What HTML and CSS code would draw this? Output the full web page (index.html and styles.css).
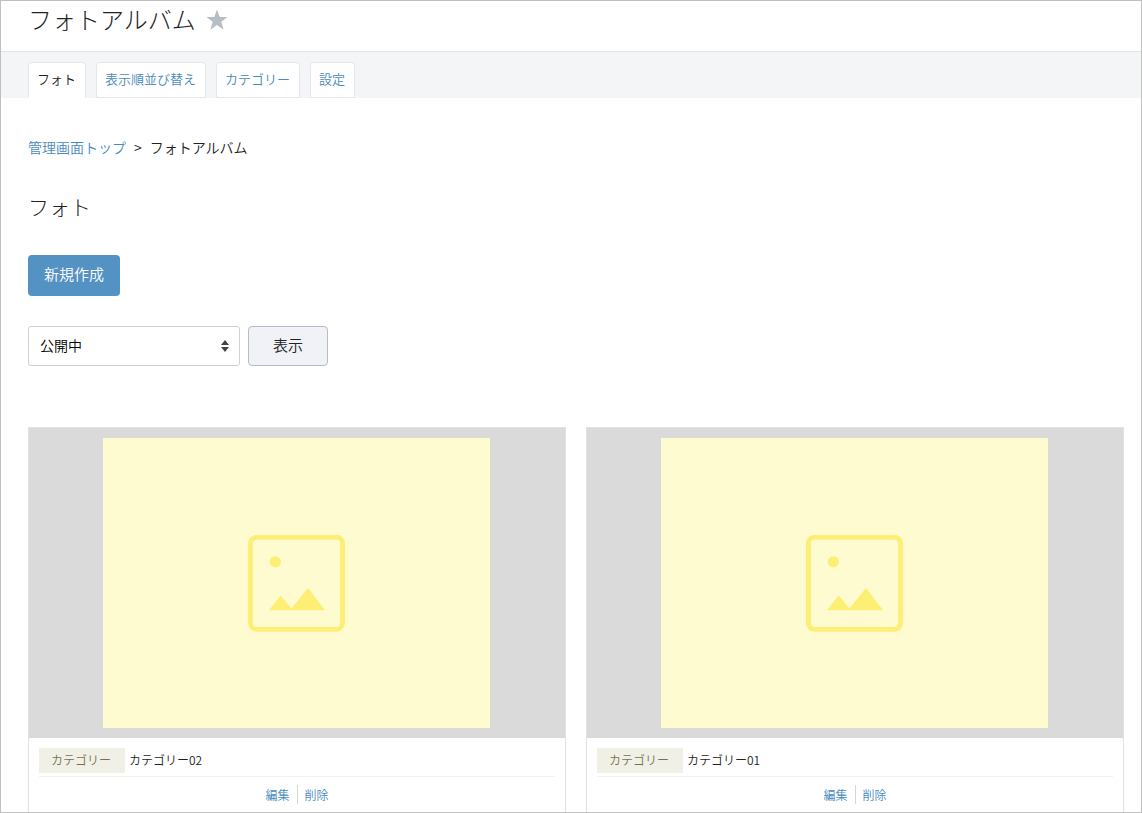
FILE: index.html
```html
<!DOCTYPE html>
<html lang="ja">
<head>
<meta charset="utf-8">
<title>フォトアルバム</title>
<link rel="stylesheet" href="styles.css">
</head>
<body>
<div class="frame">
  <header class="header">
    <h1 class="title">フォトアルバム</h1>
    <button class="star" type="button" aria-label="お気に入り">
      <svg width="22" height="22" viewBox="0 0 22 22"><path d="M11 0.500L13.700 8H21.500L15.300 12.800L17.600 20.700L11 16L4.400 20.700L6.700 12.800L0.500 8H8.300Z" fill="#b5bdc5"/></svg>
    </button>
  </header>
  <nav class="tabs">
    <a class="tab tab-active" href="#photo">フォト</a>
    <a class="tab" href="#order">表示順並び替え</a>
    <a class="tab" href="#category">カテゴリー</a>
    <a class="tab" href="#settings">設定</a>
  </nav>
  <main class="content">
    <nav class="breadcrumb">
      <a class="link" href="#top">管理画面トップ</a>
      <span>&gt;</span>
      <span>フォトアルバム</span>
    </nav>
    <h2 class="subtitle">フォト</h2>
    <button class="create" type="button">新規作成</button>
    <form class="filter">
      <div class="select-wrap">
        <select class="select" aria-label="公開状態"><option>公開中</option></select>
        <svg class="select-arrows" width="8" height="12" viewBox="0 0 8 12"><path d="M4 0L8 5H0ZM0 7H8L4 12Z" fill="#444"/></svg>
      </div>
      <button class="show" type="button">表示</button>
    </form>
    <section class="cards">
      <article class="card">
        <div class="media">
          <svg class="photo" viewBox="0 0 387 290" role="img" aria-label="カテゴリー02の写真">
            <rect width="387" height="290" fill="#fefbd0"/>
            <rect x="147.500" y="99.300" width="92" height="92" rx="6" fill="none" stroke="#fdee74" stroke-width="4.800"/>
            <circle cx="172.300" cy="123.800" r="5.600" fill="#fdee74"/>
            <path d="M166 172.300L177.700 157.500L188.500 170.500L205 150L222 172.300Z" fill="#fdee74"/>
          </svg>
        </div>
        <div class="details">
          <div class="category"><span class="label">カテゴリー</span><span class="value">カテゴリー02</span></div>
          <div class="actions"><a class="action" href="#edit">編集</a><a class="action" href="#delete">削除</a></div>
        </div>
      </article>
      <article class="card">
        <div class="media">
          <svg class="photo" viewBox="0 0 387 290" role="img" aria-label="カテゴリー01の写真">
            <rect width="387" height="290" fill="#fefbd0"/>
            <rect x="147.500" y="99.300" width="92" height="92" rx="6" fill="none" stroke="#fdee74" stroke-width="4.800"/>
            <circle cx="172.300" cy="123.800" r="5.600" fill="#fdee74"/>
            <path d="M166 172.300L177.700 157.500L188.500 170.500L205 150L222 172.300Z" fill="#fdee74"/>
          </svg>
        </div>
        <div class="details">
          <div class="category"><span class="label">カテゴリー</span><span class="value">カテゴリー01</span></div>
          <div class="actions"><a class="action" href="#edit">編集</a><a class="action" href="#delete">削除</a></div>
        </div>
      </article>
    </section>
  </main>
</div>
</body>
</html>
```
FILE: styles.css
```css
* { box-sizing: border-box; }
body {
  margin: 0;
  background: #fff;
  color: #222;
  font-family: "Noto Sans CJK JP", sans-serif;
  font-size: 14px;
  line-height: 20px;
  font-weight: 350;
}
button, select { font: inherit; color: inherit; margin: 0; }
a { color: #4a8ac0; text-decoration: none; }
.frame {
  height: 100vh;
  overflow: hidden;
  border: 1px solid #c0c0c0;
}
.header {
  display: flex;
  align-items: center;
  gap: 10px;
  height: 50px;
  padding: 0 27px 14px;
}
.title { margin: 0; font-size: 24px; line-height: 34px; font-weight: 300; }
.star { display: flex; padding: 2px 0 0; border: 0; background: none; }
.tabs {
  display: flex;
  gap: 10px;
  padding: 10px 27px 0;
  background: #f3f5f7;
  border-top: 1px solid #e3e6e8;
}
.tab {
  height: 36px;
  padding: 0 9px 0 8px;
  border: 1px solid #e3e7eb;
  border-radius: 4px 4px 0 0;
  background: #fff;
  font-size: 13px;
  line-height: 31px;
}
.tab-active { color: #222; border-bottom-color: #fff; }
.content { padding: 39px 17px 0 27px; }
.breadcrumb { display: flex; gap: 8px; }
.subtitle { margin: 34px 0; font-size: 21px; line-height: 30px; font-weight: 300; }
.create {
  display: block;
  height: 41px;
  padding: 0 16px 3px;
  border: 0;
  border-radius: 4px;
  background: #5592c4;
  color: #fff;
  font-size: 15px;
}
.filter { display: flex; gap: 8px; margin: 30px 0 61px; }
.select-wrap { position: relative; width: 212px; }
.select {
  appearance: none;
  width: 100%;
  height: 40px;
  padding: 0 28px 2px 11px;
  border: 1px solid #cdd2d8;
  border-radius: 3px;
  background: #fff;
  color: #000;
}
.select-arrows { position: absolute; right: 11px; top: 14px; pointer-events: none; }
.show {
  height: 40px;
  padding: 0 24px 2px;
  border: 1px solid #b5bcc5;
  border-radius: 4px;
  background: #f0f2f7;
  font-size: 15px;
}
.cards { display: grid; grid-template-columns: 1fr 1fr; gap: 20px; }
.card { border: 1px solid #e3e3d7; }
.media { display: flex; justify-content: center; padding: 10px 11px 10px 10px; background: #dadada; }
.photo { display: block; width: 387px; max-width: 100%; height: auto; }
.details { padding: 10px; font-size: 12px; }
.category {
  display: flex;
  gap: 4px;
  padding-bottom: 3px;
  border-bottom: 1px solid #f1f1e7;
  line-height: 23px;
}
.label { padding: 0 14px 2px 12px; background: #f0f0e6; color: #76704f; }
.actions { display: flex; justify-content: center; padding: 8px 0; }
.action { padding: 0 7px; line-height: 19px; }
.action + .action { border-left: 1px solid #d8d8c8; }
```
